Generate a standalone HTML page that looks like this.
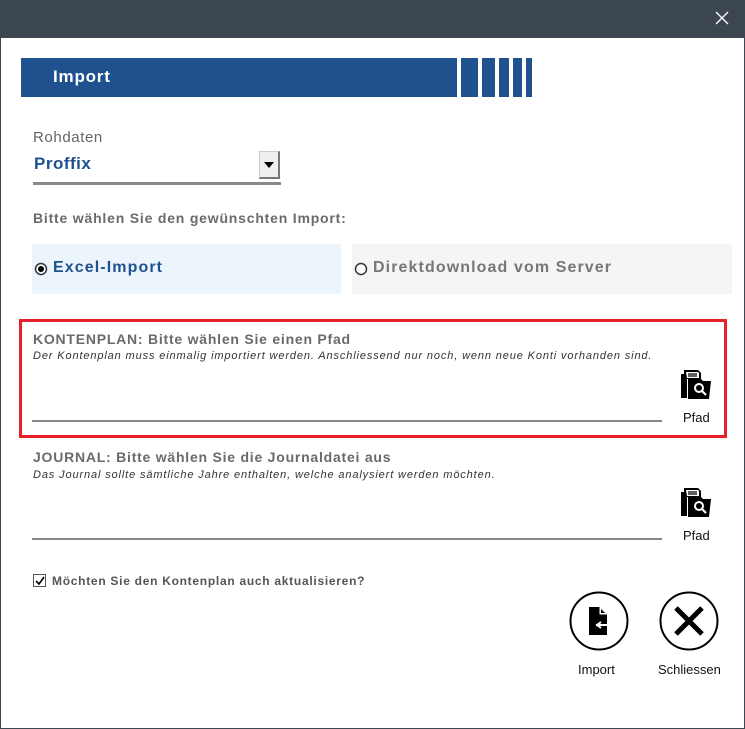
<!DOCTYPE html>
<html><head><meta charset="utf-8"><style>
*{margin:0;padding:0;box-sizing:border-box}
body{width:745px;height:729px;background:#fff;font-family:"Liberation Sans","DejaVu Sans",sans-serif;position:relative;overflow:hidden}
.win{position:absolute;left:0;top:0;width:745px;height:729px;border:1px solid #3b4650}
.tb{position:absolute;left:0;top:0;width:745px;height:38px;background:#3b4650}
.a{position:absolute;white-space:nowrap}
.lbl{color:#6a6a6a;font-weight:bold;font-size:14px;letter-spacing:0.77px}
.it{color:#333;font-style:italic;font-size:11px;letter-spacing:0.87px}
.line{position:absolute;height:2px;background:#888}
.sm{font-size:13px;color:#111}
</style></head><body>
<div class="win"></div>
<div class="tb"></div>
<svg class="a" style="left:715px;top:11px" width="14" height="14"><path d="M1 1L13 13M13 1L1 13" stroke="#fff" stroke-width="1.3"/></svg>
<div class="a" style="left:21px;top:58px;width:436px;height:39px;background:#1f518f"></div>
<div class="a" style="left:461px;top:58px;width:17px;height:39px;background:#1f518f"></div>
<div class="a" style="left:482px;top:58px;width:13px;height:39px;background:#1f518f"></div>
<div class="a" style="left:499px;top:58px;width:10px;height:39px;background:#1f518f"></div>
<div class="a" style="left:513px;top:58px;width:9px;height:39px;background:#1f518f"></div>
<div class="a" style="left:526px;top:58px;width:6px;height:39px;background:#1f518f"></div>
<div class="a" style="left:53px;top:67px;color:#fff;font-weight:bold;font-size:17px;letter-spacing:0.8px">Import</div>
<div class="a" style="left:33px;top:129px;color:#666;font-size:15px;letter-spacing:0.6px">Rohdaten</div>
<div class="a" style="left:34px;top:154px;color:#1f518f;font-weight:bold;font-size:17px;letter-spacing:0.5px">Proffix</div>
<div class="a" style="left:259px;top:151px;width:21px;height:28px;background:#eee;border:1px solid #ccc;border-right:2px solid #777;border-bottom:2px solid #777"></div>
<svg class="a" style="left:264px;top:162px" width="10" height="6"><path d="M0 0H10L5 6Z" fill="#000"/></svg>
<div class="line" style="left:33px;top:182px;width:248px;height:3px"></div>
<div class="a lbl" style="left:33px;top:210px;letter-spacing:0.8px">Bitte wählen Sie den gewünschten Import:</div>
<div class="a" style="left:32px;top:244px;width:309px;height:50px;background:#edf5fc"></div>
<div class="a" style="left:352px;top:244px;width:380px;height:50px;background:#f5f5f5"></div>
<svg class="a" style="left:34px;top:262px" width="14" height="14"><circle cx="7" cy="7" r="5.5" fill="#fff" stroke="#333" stroke-width="1.5"/><circle cx="7" cy="7" r="3" fill="#000"/></svg>
<div class="a" style="left:53px;top:259px;color:#1f518f;font-weight:bold;font-size:16px;letter-spacing:1.1px">Excel-Import</div>
<svg class="a" style="left:354px;top:262px" width="14" height="14"><circle cx="7" cy="7" r="5.5" fill="#fff" stroke="#333" stroke-width="1.5"/></svg>
<div class="a" style="left:373px;top:259px;color:#777;font-weight:bold;font-size:16px;letter-spacing:1.1px">Direktdownload vom Server</div>
<div class="a" style="left:19px;top:319px;width:708px;height:119px;border:3px solid #e8202a"></div>
<div class="a lbl" style="left:33px;top:331px">KONTENPLAN: Bitte wählen Sie einen Pfad</div>
<div class="a it" style="left:33px;top:350px">Der Kontenplan muss einmalig importiert werden. Anschliessend nur noch, wenn neue Konti vorhanden sind.</div>
<div class="line" style="left:32px;top:420px;width:630px"></div>
<div class="a lbl" style="left:33px;top:449px">JOURNAL: Bitte wählen Sie die Journaldatei aus</div>
<div class="a it" style="left:33px;top:469px">Das Journal sollte sämtliche Jahre enthalten, welche analysiert werden möchten.</div>
<div class="line" style="left:32px;top:538px;width:630px"></div>
<svg class="a" style="left:680px;top:368px" width="32" height="32" viewBox="0 0 32 32"><path d="M1 6h3v24H1z" fill="#000"/><path d="M4 2h14l3 3v6H7v19H4z" fill="#000"/><path d="M6 4h12l1 1v5H7z" fill="#fff"/><path d="M8 6h9M8 8h9" stroke="#000" stroke-width="1.2"/><path d="M8 11h13l2 2h8l-2 18H8z" fill="#000"/><circle cx="19" cy="20" r="4" fill="none" stroke="#fff" stroke-width="2"/><path d="M22 23l4 4" stroke="#fff" stroke-width="2.2"/></svg>
<div class="a sm" style="left:683px;top:410px">Pfad</div>
<svg class="a" style="left:680px;top:486px" width="32" height="32" viewBox="0 0 32 32"><path d="M1 6h3v24H1z" fill="#000"/><path d="M4 2h14l3 3v6H7v19H4z" fill="#000"/><path d="M6 4h12l1 1v5H7z" fill="#fff"/><path d="M8 6h9M8 8h9" stroke="#000" stroke-width="1.2"/><path d="M8 11h13l2 2h8l-2 18H8z" fill="#000"/><circle cx="19" cy="20" r="4" fill="none" stroke="#fff" stroke-width="2"/><path d="M22 23l4 4" stroke="#fff" stroke-width="2.2"/></svg>
<div class="a sm" style="left:683px;top:528px">Pfad</div>
<div class="a" style="left:33px;top:574px;width:13px;height:13px;border:1px solid #555;background:#fff"></div>
<svg class="a" style="left:35px;top:576px" width="10" height="10"><path d="M1 5l3 3 5-7" stroke="#000" stroke-width="1.6" fill="none"/></svg>
<div class="a" style="left:52px;top:574px;color:#555;font-weight:bold;font-size:12px;letter-spacing:0.72px">Möchten Sie den Kontenplan auch aktualisieren?</div>
<svg class="a" style="left:569px;top:591px" width="60" height="60"><circle cx="30" cy="30" r="28.5" fill="#fff" stroke="#000" stroke-width="2"/><path d="M20 16h11l7 7v21H20z" fill="#000"/><path d="M31 16v7h7" fill="#fff" stroke="#fff"/><path d="M32 18l4 4h-4z" fill="#000"/><path d="M27 34h14" stroke="#fff" stroke-width="2"/><path d="M32 31l-4 3 4 3" stroke="#fff" stroke-width="2" fill="none"/></svg>
<div class="a sm" style="left:578px;top:662px">Import</div>
<svg class="a" style="left:659px;top:591px" width="60" height="60"><circle cx="30" cy="30" r="28.5" fill="#fff" stroke="#000" stroke-width="2"/><path d="M17 17L43 43M43 17L17 43" stroke="#000" stroke-width="5"/></svg>
<div class="a sm" style="left:658px;top:662px">Schliessen</div>
</body></html>
